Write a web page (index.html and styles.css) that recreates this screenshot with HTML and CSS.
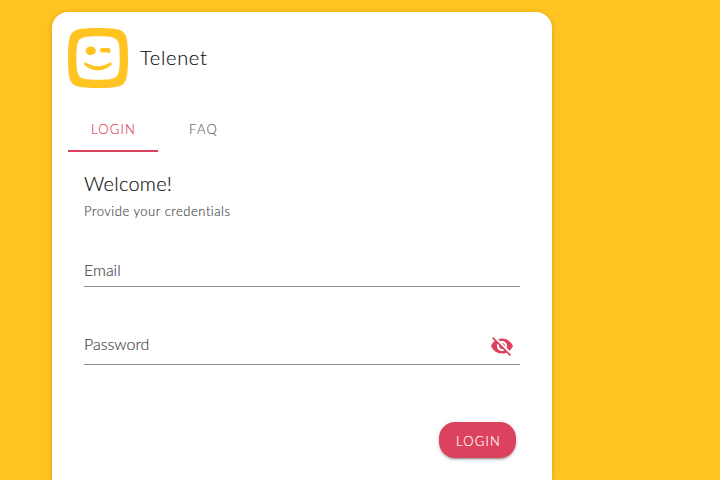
FILE: index.html
```html
<!DOCTYPE html>
<html lang="en">
<head>
<meta charset="utf-8">
<title>Telenet</title>
<link rel="stylesheet" href="styles.css">
</head>
<body>
<main class="card">
  <header class="brand">
    <svg class="logo" viewBox="0 0 60 60" aria-hidden="true">
      <path fill="#ffc421" fill-rule="evenodd" d="M30 0C39 0 46 .5 50 1.500Q57 3 58.500 10C59.500 14 60 21 60 30C60 39 59.500 46 58.500 50Q57 57 50 58.500C46 59.500 39 60 30 60C21 60 14 59.500 10 58.500Q3 57 1.500 50C.5 46 0 39 0 30C0 21 .5 14 1.500 10Q3 3 10 1.500C14 .5 21 0 30 0ZM30 8.200C23 8.200 19 8.500 16 9.200Q10.500 10.500 9.400 16C8.800 19 8.400 23 8.400 30C8.400 37 8.800 41 9.400 44Q10.500 49.500 16 50.800C19 51.500 23 51.800 30 51.800C37 51.800 41 51.500 44 50.800Q49.500 49.500 50.800 44C51.500 41 51.800 37 51.800 30C51.800 23 51.500 19 50.800 16Q49.500 10.500 44 9.200C41 8.500 37 8.200 30 8.200Z"/>
      <ellipse cx="22.700" cy="22.800" rx="5.200" ry="4.300" fill="#ffc421"/>
      <path fill="#ffc421" d="M32.200 20.400Q37 19.200 42 20.400Q42.800 22.800 42 25.200Q37 23.900 32.400 24.500Q31.800 22.600 32.200 20.400ZM16.500 34.100Q30 42.400 43.200 34.100Q43.900 35.500 43.500 37Q37 42.300 29.700 42.400Q22.500 42.300 16.500 37Q16.100 35.500 16.500 34.100Z"/>
    </svg>
    <h1 class="brand-name">Telenet</h1>
  </header>
  <nav class="tabs">
    <a class="tab tab-active">LOGIN</a>
    <a class="tab">FAQ</a>
  </nav>
  <form class="login">
    <h2 class="title">Welcome!</h2>
    <p class="subtitle">Provide your credentials</p>
    <div class="field field-email"><span class="label-email">Email</span></div>
    <div class="field field-password">
      <span class="label-password">Password</span>
      <svg class="eye" viewBox="0 0 24 24" aria-hidden="true"><path fill="#dc415d" d="M12 7c2.760 0 5 2.240 5 5 0 .650-.130 1.260-.360 1.830l2.920 2.920c1.510-1.260 2.700-2.890 3.430-4.750-1.730-4.390-6-7.500-11-7.500-1.400 0-2.740.250-3.980.700l2.160 2.160C10.740 7.130 11.350 7 12 7zM2 4.270l2.280 2.280.460.460C3.080 8.300 1.780 10.020 1 12c1.730 4.390 6 7.500 11 7.500 1.550 0 3.030-.300 4.380-.840l.420.420L19.730 22 21 20.730 3.270 3 2 4.270zM7.530 9.800l1.550 1.550c-.050.210-.080.430-.080.650 0 1.660 1.340 3 3 3 .220 0 .440-.030.650-.080l1.550 1.550c-.670.330-1.410.530-2.200.530-2.760 0-5-2.240-5-5 0-.790.200-1.530.530-2.200zm4.310-.780l3.150 3.150.020-.160c0-1.660-1.340-3-3-3l-.170.010z"/></svg>
    </div>
    <div class="actions"><button class="submit" type="button">LOGIN</button></div>
  </form>
</main>
</body>
</html>
```
FILE: styles.css
```css
* { box-sizing: border-box; }
body {
  margin: 0;
  height: 480px;
  padding: 12px 0 0 52px;
  background: #ffc421;
  font-family: Lato, sans-serif;
  font-weight: 300;
  -webkit-text-stroke: .15px currentColor;
}
.card {
  width: 500px;
  height: 468px;
  padding: 16px;
  background: #fff;
  border-radius: 16px 16px 0 0;
  box-shadow: 0 1px 5px rgba(0, 0, 0, .18);
}
.brand { display: flex; align-items: center; gap: 12px; height: 60px; }
.logo { width: 60px; height: 60px; }
.brand-name { margin: 0; padding-bottom: 1px; font-size: 20px; line-height: 23px; font-weight: 300; letter-spacing: .7px; color: #111; }
.tabs { display: flex; height: 48px; margin-top: 16px; }
.tab {
  width: 90px;
  height: 48px;
  padding: 3px 0 0 1px;
  line-height: 45px;
  text-align: center;
  font-size: 13px;
  letter-spacing: 1.2px;
  color: #666;
  border-bottom: 2px solid transparent;
}
.tab-active { color: #dc415d; border-color: #dc415d; }
.login { padding: 19px 16px 0; }
.title { margin: 0; font-size: 20px; line-height: 25px; font-weight: 300; letter-spacing: .25px; color: #111; }
.subtitle { margin: 6px 0 0; font-size: 13px; line-height: 19px; letter-spacing: .52px; color: #444; }
.field {
  display: flex;
  justify-content: space-between;
  align-items: center;
  border-bottom: 1px solid #8c8c8c;
  font-size: 16px;
  color: #444;
}
.label-email { padding-bottom: 2px; }
.label-password { padding-bottom: 5px; }
.field-email { height: 33px; margin-top: 33px; }
.field-password { height: 38px; margin-top: 40px; padding-right: 6px; }
.eye { width: 24px; height: 24px; }
.actions { display: flex; justify-content: flex-end; padding: 57px 4px 0 0; }
.submit {
  width: 77px;
  height: 36px;
  padding: 2px 0 0 2px;
  border: 0;
  border-radius: 16px;
  background: #dc415d;
  color: #fff;
  font: 300 13px/20px Lato, sans-serif;
  letter-spacing: 1.2px;
  box-shadow: 0 3px 1px -2px rgba(0,0,0,.2), 0 2px 2px rgba(0,0,0,.14), 0 1px 5px rgba(0,0,0,.12);
}
```
